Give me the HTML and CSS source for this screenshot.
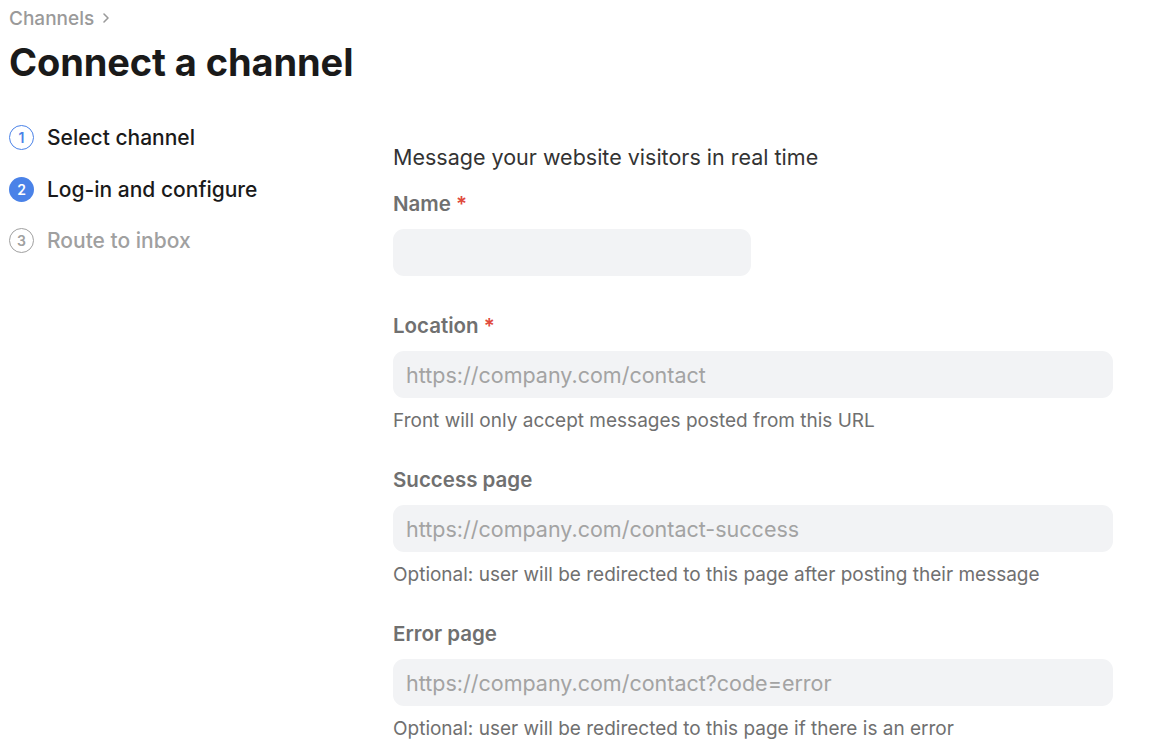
FILE: index.html
```html
<!DOCTYPE html>
<html lang="en">
<head>
    <meta charset="UTF-8">
    <meta name="viewport" content="width=device-width, initial-scale=1.0">
    <title>Connect a channel</title>
    <link rel="stylesheet" href="styles.css">
</head>
<body>

    <!-- Breadcrumb and title -->
    <header class="page-header">
        <div class="breadcrumb">
            <span>Channels</span>
            <svg class="chevron" width="10" height="12" viewBox="0 0 10 12">
                <path d="M3 2 L7 6 L3 10" fill="none" stroke="#9a9a9a" stroke-width="1.6" stroke-linecap="round" stroke-linejoin="round"/>
            </svg>
        </div>
        <h1>Connect a channel</h1>
    </header>

    <div class="layout">
        <!-- Steps -->
        <ol class="steps">
            <li class="step done"><span class="step-num">1</span>Select channel</li>
            <li class="step active"><span class="step-num">2</span>Log-in and configure</li>
            <li class="step todo"><span class="step-num">3</span>Route to inbox</li>
        </ol>

        <!-- Form -->
        <form class="channel-form">
            <p class="intro">Message your website visitors in real time</p>

            <div class="field no-hint">
                <label for="name">Name <span class="req">*</span></label>
                <input type="text" id="name" class="form-control short">
            </div>

            <div class="field">
                <label for="location">Location <span class="req">*</span></label>
                <input type="url" id="location" class="form-control" placeholder="https://company.com/contact">
                <p class="hint">Front will only accept messages posted from this URL</p>
            </div>

            <div class="field">
                <label for="success">Success page</label>
                <input type="url" id="success" class="form-control" placeholder="https://company.com/contact-success">
                <p class="hint">Optional: user will be redirected to this page after posting their message</p>
            </div>

            <div class="field">
                <label for="error">Error page</label>
                <input type="url" id="error" class="form-control" placeholder="https://company.com/contact?code=error">
                <p class="hint">Optional: user will be redirected to this page if there is an error</p>
            </div>
        </form>
    </div>

</body>
</html>
```

FILE: styles.css
```css
* {
    margin: 0;
    padding: 0;
    box-sizing: border-box;
}

body {
    font-family: Inter, "Noto Sans", sans-serif;
    background-color: #fff;
    color: #1a1a1a;
    padding: 7px 9px 0;
}

.breadcrumb {
    display: flex;
    align-items: center;
    gap: 7px;
    font-size: 19px;
    font-weight: 500;
    color: #9a9a9a;
    height: 22px;
}

h1 {
    font-size: 38px;
    font-weight: 700;
    letter-spacing: -0.1px;
    margin-top: 11px;
    line-height: 44px;
}

.layout {
    display: grid;
    grid-template-columns: 384px 720px;
    margin-top: 28px;
}

.steps {
    list-style: none;
}

.step {
    display: flex;
    align-items: center;
    gap: 13px;
    font-size: 21px;
    font-weight: 500;
    height: 51.5px;
}

.step-num {
    width: 25px;
    height: 25px;
    border-radius: 50%;
    display: flex;
    align-items: center;
    justify-content: center;
    font-size: 14px;
    font-weight: 600;
}

.done .step-num {
    border: 1.5px solid #4a82e8;
    color: #4a82e8;
}

.active .step-num {
    background-color: #4a82e8;
    color: #fff;
}

.todo {
    color: #a0a0a0;
}

.todo .step-num {
    border: 1.5px solid #a0a0a0;
    color: #a0a0a0;
}

.channel-form {
    padding-top: 32px;
}

.intro {
    font-size: 21.5px;
    color: #333;
    line-height: 26px;
    margin-bottom: 22px;
}

.field {
    margin-bottom: 35px;
}

.field.no-hint {
    margin-bottom: 38px;
}

.field label {
    display: block;
    font-size: 20.5px;
    font-weight: 600;
    color: #707070;
    line-height: 24px;
    margin-bottom: 13px;
}

.req {
    color: #e04a3c;
}

.form-control {
    display: block;
    width: 100%;
    height: 47px;
    border: none;
    border-radius: 11px;
    background-color: #f2f3f5;
    padding: 0 13px;
    font-family: inherit;
    font-size: 21.5px;
    color: #333;
    outline: none;
}

.form-control::placeholder {
    color: #a3a3a3;
}

.form-control.short {
    width: 358px;
}

.hint {
    font-size: 19px;
    color: #707070;
    margin-top: 11px;
    line-height: 24px;
}
```
